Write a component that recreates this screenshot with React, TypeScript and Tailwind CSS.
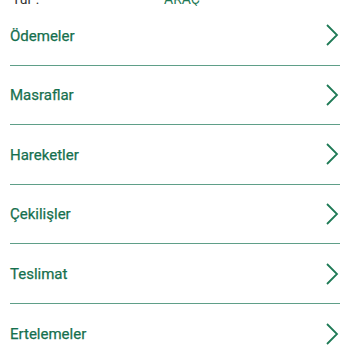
import React from "react";

const items = ["Ödemeler", "Masraflar", "Hareketler", "Çekilişler", "Teslimat", "Ertelemeler"];

function Chevron() {
  return (
    <svg width="14" height="22" viewBox="0 0 14 22" fill="none">
      <polyline points="2,1 12,11 2,21" stroke="#1f7a56" strokeWidth="1.8" strokeLinejoin="miter" />
    </svg>
  );
}

export default function App() {
  return (
    <div className="w-[350px] h-[350px] overflow-hidden bg-white" style={{ fontFamily: "Roboto, 'Liberation Sans', Arial, sans-serif" }}>
      <div className="flex items-end h-[6px] overflow-hidden">
        <div className="flex -mb-[1px] text-[14px] leading-[16px]">
          <span className="w-[164px] pl-[12px] text-[#333333]">Tür :</span>
          <span className="text-[#1f7a56]">ARAÇ</span>
        </div>
      </div>
      <div className="px-[10px]">
        {items.map((label, i) => (
          <div
            key={label}
            className={`flex items-center justify-between h-[59.6px] ${i < items.length - 1 ? "border-b border-[#5f9f88]" : ""}`}
          >
            <span className="text-[15px] text-[#16704e] pt-[1px] [-webkit-text-stroke:0.25px_#16704e]">{label}</span>
            <span className="mr-[1px]">
              <Chevron />
            </span>
          </div>
        ))}
      </div>
    </div>
  );
}
